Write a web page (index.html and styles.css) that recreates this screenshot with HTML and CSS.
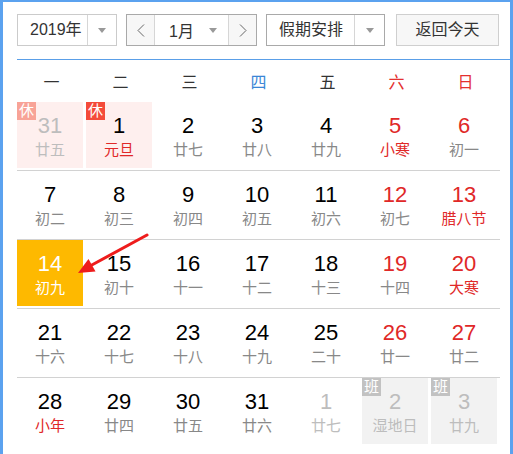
FILE: index.html
```html
<!DOCTYPE html>
<html lang="zh-CN">
<head>
    <meta charset="UTF-8">
    <meta name="viewport" content="width=device-width, initial-scale=1.0">
    <title>万年历</title>
    <link rel="stylesheet" href="styles.css">
</head>
<body>
    <div class="frame">
        <div class="toolbar">
            <div class="select year-select">
                <span class="select-label">2019年</span>
                <span class="select-drop"><i class="caret"></i></span>
            </div>
            <div class="month-group">
                <span class="nav-btn">
                    <svg width="8" height="13" viewBox="0 0 8 13"><polyline points="7,0.5 1,6.5 7,12.5" fill="none" stroke="#666" stroke-width="1"/></svg>
                </span>
                <span class="month-label">1月<i class="caret"></i></span>
                <span class="nav-btn">
                    <svg width="8" height="13" viewBox="0 0 8 13"><polyline points="1,0.5 7,6.5 1,12.5" fill="none" stroke="#666" stroke-width="1"/></svg>
                </span>
            </div>
            <div class="select holiday-select">
                <span class="select-label">假期安排</span>
                <span class="select-drop"><i class="caret"></i></span>
            </div>
            <div class="today-btn">返回今天</div>
        </div>

        <div class="weekdays">
            <span>一</span>
            <span>二</span>
            <span>三</span>
            <span class="current">四</span>
            <span>五</span>
            <span class="weekend">六</span>
            <span class="weekend">日</span>
        </div>

        <div class="days">
            <div class="day other rest"><div class="box"><i class="badge">休</i><b>31</b><em>廿五</em></div></div>
            <div class="day rest"><div class="box"><i class="badge">休</i><b>1</b><em class="fest">元旦</em></div></div>
            <div class="day"><div class="box"><b>2</b><em>廿七</em></div></div>
            <div class="day"><div class="box"><b>3</b><em>廿八</em></div></div>
            <div class="day"><div class="box"><b>4</b><em>廿九</em></div></div>
            <div class="day weekend"><div class="box"><b>5</b><em class="fest">小寒</em></div></div>
            <div class="day weekend"><div class="box"><b>6</b><em>初一</em></div></div>

            <div class="day"><div class="box"><b>7</b><em>初二</em></div></div>
            <div class="day"><div class="box"><b>8</b><em>初三</em></div></div>
            <div class="day"><div class="box"><b>9</b><em>初四</em></div></div>
            <div class="day"><div class="box"><b>10</b><em>初五</em></div></div>
            <div class="day"><div class="box"><b>11</b><em>初六</em></div></div>
            <div class="day weekend"><div class="box"><b>12</b><em>初七</em></div></div>
            <div class="day weekend"><div class="box"><b>13</b><em class="fest">腊八节</em></div></div>

            <div class="day today"><div class="box"><b>14</b><em>初九</em></div></div>
            <div class="day"><div class="box"><b>15</b><em>初十</em></div></div>
            <div class="day"><div class="box"><b>16</b><em>十一</em></div></div>
            <div class="day"><div class="box"><b>17</b><em>十二</em></div></div>
            <div class="day"><div class="box"><b>18</b><em>十三</em></div></div>
            <div class="day weekend"><div class="box"><b>19</b><em>十四</em></div></div>
            <div class="day weekend"><div class="box"><b>20</b><em class="fest">大寒</em></div></div>

            <div class="day"><div class="box"><b>21</b><em>十六</em></div></div>
            <div class="day"><div class="box"><b>22</b><em>十七</em></div></div>
            <div class="day"><div class="box"><b>23</b><em>十八</em></div></div>
            <div class="day"><div class="box"><b>24</b><em>十九</em></div></div>
            <div class="day"><div class="box"><b>25</b><em>二十</em></div></div>
            <div class="day weekend"><div class="box"><b>26</b><em>廿一</em></div></div>
            <div class="day weekend"><div class="box"><b>27</b><em>廿二</em></div></div>

            <div class="day"><div class="box"><b>28</b><em class="fest">小年</em></div></div>
            <div class="day"><div class="box"><b>29</b><em>廿四</em></div></div>
            <div class="day"><div class="box"><b>30</b><em>廿五</em></div></div>
            <div class="day"><div class="box"><b>31</b><em>廿六</em></div></div>
            <div class="day other"><div class="box"><b>1</b><em>廿七</em></div></div>
            <div class="day other work"><div class="box"><i class="badge">班</i><b>2</b><em>湿地日</em></div></div>
            <div class="day other work"><div class="box"><i class="badge">班</i><b>3</b><em>廿九</em></div></div>
        </div>
    </div>

    <!-- 标注箭头 -->
    <svg class="pointer" width="513" height="454" viewBox="0 0 513 454">
        <line x1="147" y1="235" x2="90" y2="266" stroke="#ee1c1c" stroke-width="3" stroke-linecap="round"/>
        <polygon points="78,273 88.5,259 95.5,271.5" fill="#ee1c1c"/>
    </svg>
</body>
</html>
```

FILE: styles.css
```css
* {
    margin: 0;
    padding: 0;
    box-sizing: border-box;
}

body {
    font-family: "Liberation Sans", "Noto Sans CJK SC", sans-serif;
    background: #fff;
    color: #333;
    overflow: hidden;
}

.frame {
    width: 513px;
    height: 454px;
    border: 3px solid #5ba2ef;
    border-top-width: 2px;
    border-bottom: none;
    padding: 12px 0 0 14px;
}

/* 顶部工具条 */
.toolbar {
    display: flex;
    height: 32px;
    font-size: 16px;
}

.select {
    display: flex;
    height: 32px;
    border: 1px solid #cbcbcb;
    background: #fff;
}

.select-label {
    flex: 1;
    line-height: 30px;
    padding-left: 12px;
}

.select-drop {
    width: 29px;
    border-left: 1px solid #d6d6d6;
    display: flex;
    align-items: center;
    justify-content: center;
}

.caret {
    display: inline-block;
    width: 0;
    height: 0;
    border-left: 4px solid transparent;
    border-right: 4px solid transparent;
    border-top: 5px solid #999;
}

.year-select {
    width: 100px;
}

.month-group {
    display: flex;
    width: 131px;
    height: 32px;
    margin-left: 9px;
    border: 1px solid #a9a9a9;
}

.nav-btn {
    width: 27px;
    background: #f7f7f7;
    display: flex;
    align-items: center;
    justify-content: center;
}

.month-label {
    flex: 1;
    display: flex;
    align-items: center;
    justify-content: space-between;
    padding: 0 11px 0 14px;
    border-left: 1px solid #d6d6d6;
    border-right: 1px solid #d6d6d6;
}

.holiday-select {
    width: 119px;
    margin-left: 9px;
    border-color: #a9a9a9;
}

.holiday-select .select-drop {
    width: 30px;
}

.today-btn {
    width: 103px;
    height: 32px;
    margin-left: 11px;
    border: 1px solid #cfcfcf;
    background: #f7f7f7;
    text-align: center;
    line-height: 30px;
}

/* 星期 */
.weekdays {
    display: grid;
    grid-template-columns: repeat(7, 69px);
    margin-top: 13px;
    height: 43px;
    border-top: 1px solid #5a9fe8;
    font-size: 16px;
    align-items: center;
    text-align: center;
}

.weekdays .current {
    color: #3a86d6;
}

.weekdays .weekend {
    color: #e43030;
}

/* 日期格子 */
.days {
    display: grid;
    grid-template-columns: repeat(7, 69px);
}

.day {
    padding: 0 3px 2px 0;
    border-bottom: 1px solid #d2d2d2;
}

.day:nth-last-child(-n+7) {
    border-bottom: none;
}

.box {
    position: relative;
    height: 66px;
    padding-top: 12px;
    text-align: center;
}

.box b {
    display: block;
    font-weight: normal;
    font-size: 22px;
    line-height: 24px;
    color: #000;
}

.box em {
    display: block;
    font-style: normal;
    font-size: 15px;
    line-height: 18px;
    margin-top: 3px;
    color: #888;
}

.box em.fest {
    color: #e02828;
}

.weekend b {
    color: #e02828;
}

.rest .box {
    background: #feefee;
}

.work .box {
    background: #f2f2f2;
}

.badge {
    position: absolute;
    top: 0;
    left: 0;
    width: 19px;
    height: 18px;
    font-style: normal;
    font-size: 15px;
    line-height: 18px;
    color: #fff;
    background: #f44b3a;
}

.work .badge {
    background: #c2c2c2;
}

.other .box b,
.other .box em {
    color: #bdbdbd;
}

.other.rest .badge {
    background: #f8a397;
}

.today .box {
    background: #feb900;
}

.today .box b,
.today .box em {
    color: #fff;
}

.pointer {
    position: absolute;
    top: 0;
    left: 0;
    pointer-events: none;
}
```
